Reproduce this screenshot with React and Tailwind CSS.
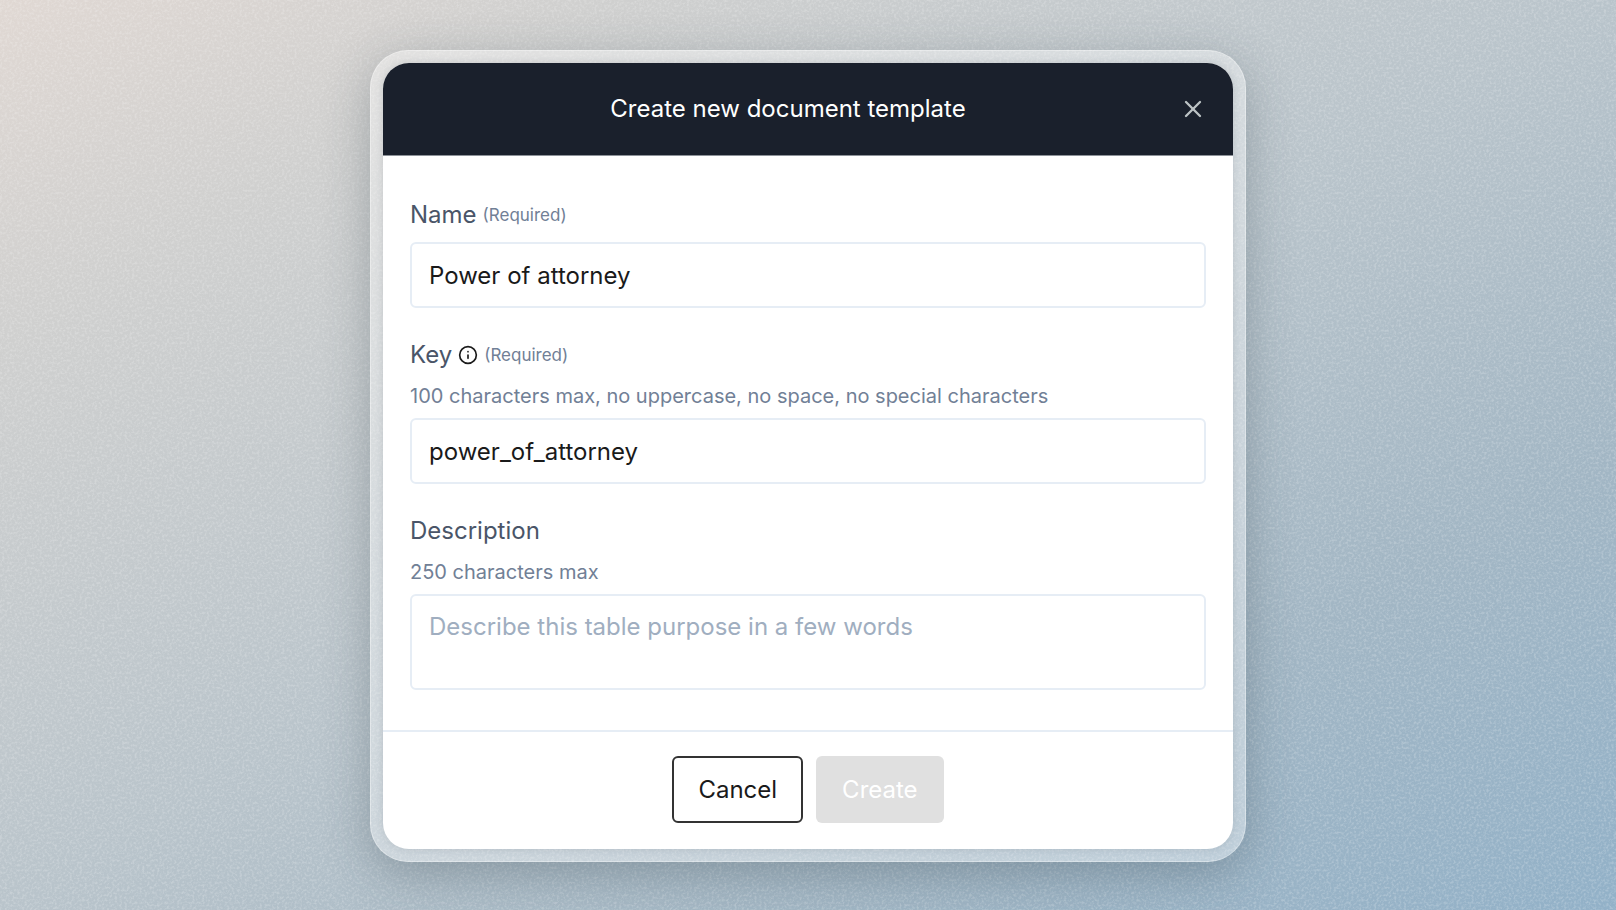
import React from 'react';
import { FiX, FiInfo } from 'react-icons/fi';

const inputStyle =
  'block w-full rounded-md border-2 border-[#e6edf5] bg-white px-[17px] text-2xl leading-8 text-[#1a1a1a] placeholder:text-[#a0aec0] placeholder:opacity-100 outline-none';

function Label({ htmlFor, text, icon, required }) {
  return (
    <div className="flex items-center gap-1.5 leading-[34px]">
      <label htmlFor={htmlFor} className="text-2xl leading-[34px] text-[#4a5568]">{text}</label>
      {icon}
      {required && <span className="text-[17px] text-[#718096]">(Required)</span>}
    </div>
  );
}

function Grain() {
  return (
    <svg className="pointer-events-none absolute inset-0 h-full w-full opacity-20" aria-hidden="true">
      <filter id="grain">
        <feTurbulence type="fractalNoise" baseFrequency="0.4" numOctaves="2" stitchTiles="stitch" />
        <feColorMatrix values="0 0 0 0 1  0 0 0 0 1  0 0 0 0 1  3 0 0 0 -1.3" />
      </filter>
      <rect width="100%" height="100%" filter="url(#grain)" />
    </svg>
  );
}

function TemplateModal() {
  return (
    <form
      role="dialog"
      aria-labelledby="modal-title"
      className="overflow-hidden rounded-[26px] bg-white shadow-[0_0_8px_rgba(40,55,65,0.15)]"
      onSubmit={(e) => e.preventDefault()}
    >
      <header className="flex items-center border-b border-[#8d9299] bg-[#1a202c] px-5 py-[26px]">
        <h2 id="modal-title" className="flex-1 text-center text-2xl leading-10 text-white">
          Create new document template
        </h2>
        <button type="button" aria-label="Close" className="flex h-10 w-10 items-center justify-center text-[#bcc3c5]">
          <FiX size={28} />
        </button>
      </header>

      <div className="flex flex-col gap-[30px] px-[27px] pt-[42px] pb-10">
        <div>
          <Label htmlFor="name" text="Name" required />
          <input id="name" type="text" defaultValue="Power of attorney" className={`${inputStyle} mt-[10px] h-[66px]`} />
        </div>
        <div>
          <Label
            htmlFor="key"
            text="Key"
            icon={<FiInfo size={20} className="text-[#1a1a1a]" />}
            required
          />
          <p id="key-help" className="mt-[10px] text-xl leading-7 text-[#718096]">
            100 characters max, no uppercase, no space, no special characters
          </p>
          <input
            id="key"
            type="text"
            defaultValue="power_of_attorney"
            aria-describedby="key-help"
            className={`${inputStyle} mt-2 h-[66px]`}
          />
        </div>
        <div>
          <Label htmlFor="description" text="Description" />
          <p id="description-help" className="mt-[10px] text-xl leading-7 text-[#718096]">250 characters max</p>
          <textarea
            id="description"
            placeholder="Describe this table purpose in a few words"
            aria-describedby="description-help"
            className={`${inputStyle} mt-2 h-24 resize-none py-[15px]`}
          />
        </div>
      </div>

      <footer className="flex justify-center gap-[13px] border-t-2 border-[#e6edf5] pt-6 pb-[26px]">
        <button type="button" className="h-[67px] rounded-md border-2 border-[#333333] bg-white px-6 text-2xl text-[#1a1a1a]">
          Cancel
        </button>
        <button type="submit" disabled className="h-[67px] rounded-md bg-[#e0e0e0] px-[26px] text-2xl text-white">
          Create
        </button>
      </footer>
    </form>
  );
}

function App() {
  return (
    <main className="relative flex min-h-screen items-center justify-center overflow-hidden bg-[linear-gradient(to_bottom_right,#e0d8d3_0%,#d0d0cf_18%,#b9c4cb_50%,#a2b6c4_75%,#92b1c8_100%)] pt-0.5 font-['Inter',sans-serif]">
      <Grain />
      <div className="relative w-full max-w-[876px] rounded-[38px] border border-white/35 bg-white/35 p-3 shadow-[0_12px_48px_rgba(40,55,65,0.3)]">
        <TemplateModal />
      </div>
    </main>
  );
}

export default App;
